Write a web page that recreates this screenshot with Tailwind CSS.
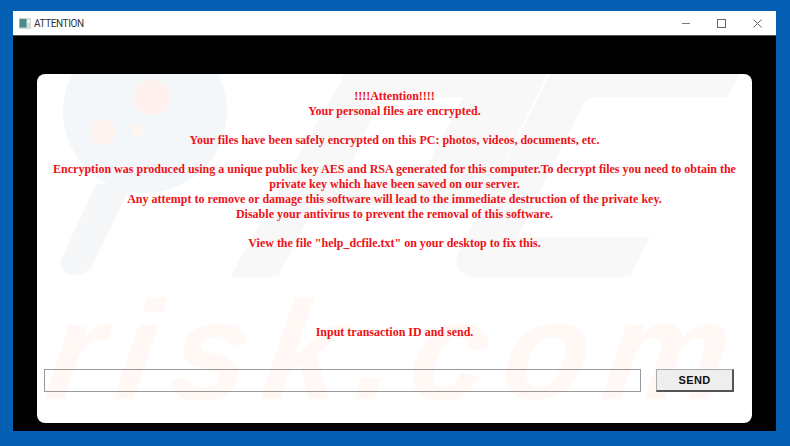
<!DOCTYPE html>
<html lang="en">
<head>
<meta charset="UTF-8">
<title>ATTENTION</title>
<script src="https://cdn.jsdelivr.net/npm/@tailwindcss/browser@4"></script>
</head>
<body class="w-[790px] h-[446px] overflow-hidden bg-[#0560b4] pt-[11px] pl-[13px] font-['Liberation_Sans',sans-serif]">
  <div class="w-[763px] h-[420px] flex flex-col bg-black">
    <!-- title bar -->
    <div class="h-[25px] shrink-0 flex items-center bg-white border-b border-[#555]">
      <svg class="ml-[6px] w-[12px] h-[11px]" viewBox="0 0 12 11">
        <rect width="12" height="11" fill="#d3dcda"/>
        <rect x="0.5" y="1" width="7" height="8.5" fill="#4a8a88"/>
        <rect x="8" y="2" width="3" height="3" fill="#eef3f1"/>
      </svg>
      <span class="ml-[3px] text-[10px] tracking-[-0.4px] text-[#333] font-['Roboto',sans-serif]">ATTENTION</span>
      <div class="ml-auto flex items-center gap-[27px] pr-[14px]">
        <div class="w-[8px] h-px bg-[#777]"></div>
        <div class="w-[9px] h-[9px] border border-[#666]"></div>
        <svg class="w-[9px] h-[9px]" viewBox="0 0 9 9" stroke="#666" fill="none"><path d="M0.5 0.5 8.5 8.5M8.5 0.5 0.5 8.5"/></svg>
      </div>
    </div>
    <!-- content panel -->
    <div class="flex-1 pt-[38px] pl-[24px]">
      <div class="relative w-[715px] h-[349px] bg-white rounded-[8px] flex flex-col font-['Liberation_Serif',serif]">
        <!-- watermark -->
        <svg class="absolute inset-0" width="715" height="349" viewBox="37 74 715 349">
          <circle cx="145" cy="111" r="82" fill="#f4f7fa"/>
          <path d="M96 184 132 184 92 266C84 280 60 278 60 262Z" fill="#f6f7f9"/>
          <circle cx="152" cy="97" r="18" fill="#fff2ee"/>
          <circle cx="103" cy="132" r="13" fill="#fff4f0"/>
          <circle cx="137" cy="130" r="6" fill="#fff5f2"/>
          <path fill-rule="evenodd" d="M345 74H547L495 180C488 198 470 205 450 205H315L278 277H230ZM380 97 345 180H420L463 97Z" fill="#f8f8f9"/>
          <path d="M550 74H740L728 97H600C590 97 585 100 580 110L518 237H650L630 277H480C458 277 452 265 460 250Z" fill="#f8f8f9"/>
        </svg>
        <div class="absolute left-[12px] top-[217px] text-[140px] leading-[120px] font-bold italic -skew-x-[8deg] text-[#fff8f4] font-['Liberation_Sans',sans-serif] tracking-[15px] whitespace-nowrap">risk.com</div>

        <div class="relative flex-1 flex flex-col">
          <div class="pt-[15px] text-center text-[#ec1218] font-bold text-[12px] leading-[14.7px] px-[10px]">
            <p>!!!!Attention!!!!</p>
            <p>Your personal files are encrypted.</p>
            <p class="mt-[14.7px]">Your files have been safely encrypted on this PC: photos, videos, documents, etc.</p>
            <p class="mt-[14.7px]">Encryption was produced using a unique public key AES and RSA generated for this computer.To decrypt files you need to obtain the private key which have been saved on our server.</p>
            <p>Any attempt to remove or damage this software will lead to the immediate destruction of the private key.</p>
            <p>Disable your antivirus to prevent the removal of this software.</p>
            <p class="mt-[14.7px]">View the file "help_dcfile.txt" on your desktop to fix this.</p>
            <p class="mt-[74px]">Input transaction ID and send.</p>
          </div>
          <div class="flex items-center pl-[7px] mt-[30px]">
            <div class="w-[597px] h-[23px] border border-[#999]"></div>
            <button class="ml-[15px] w-[78px] h-[23px] bg-[#eeeeee] border border-[#aaa] border-r-[#555] border-b-[#555] border-r-2 border-b-2 text-[11px] font-bold text-[#111] font-['Liberation_Sans',sans-serif] tracking-[0.4px]">SEND</button>
          </div>
        </div>
      </div>
    </div>
  </div>
</body>
</html>
